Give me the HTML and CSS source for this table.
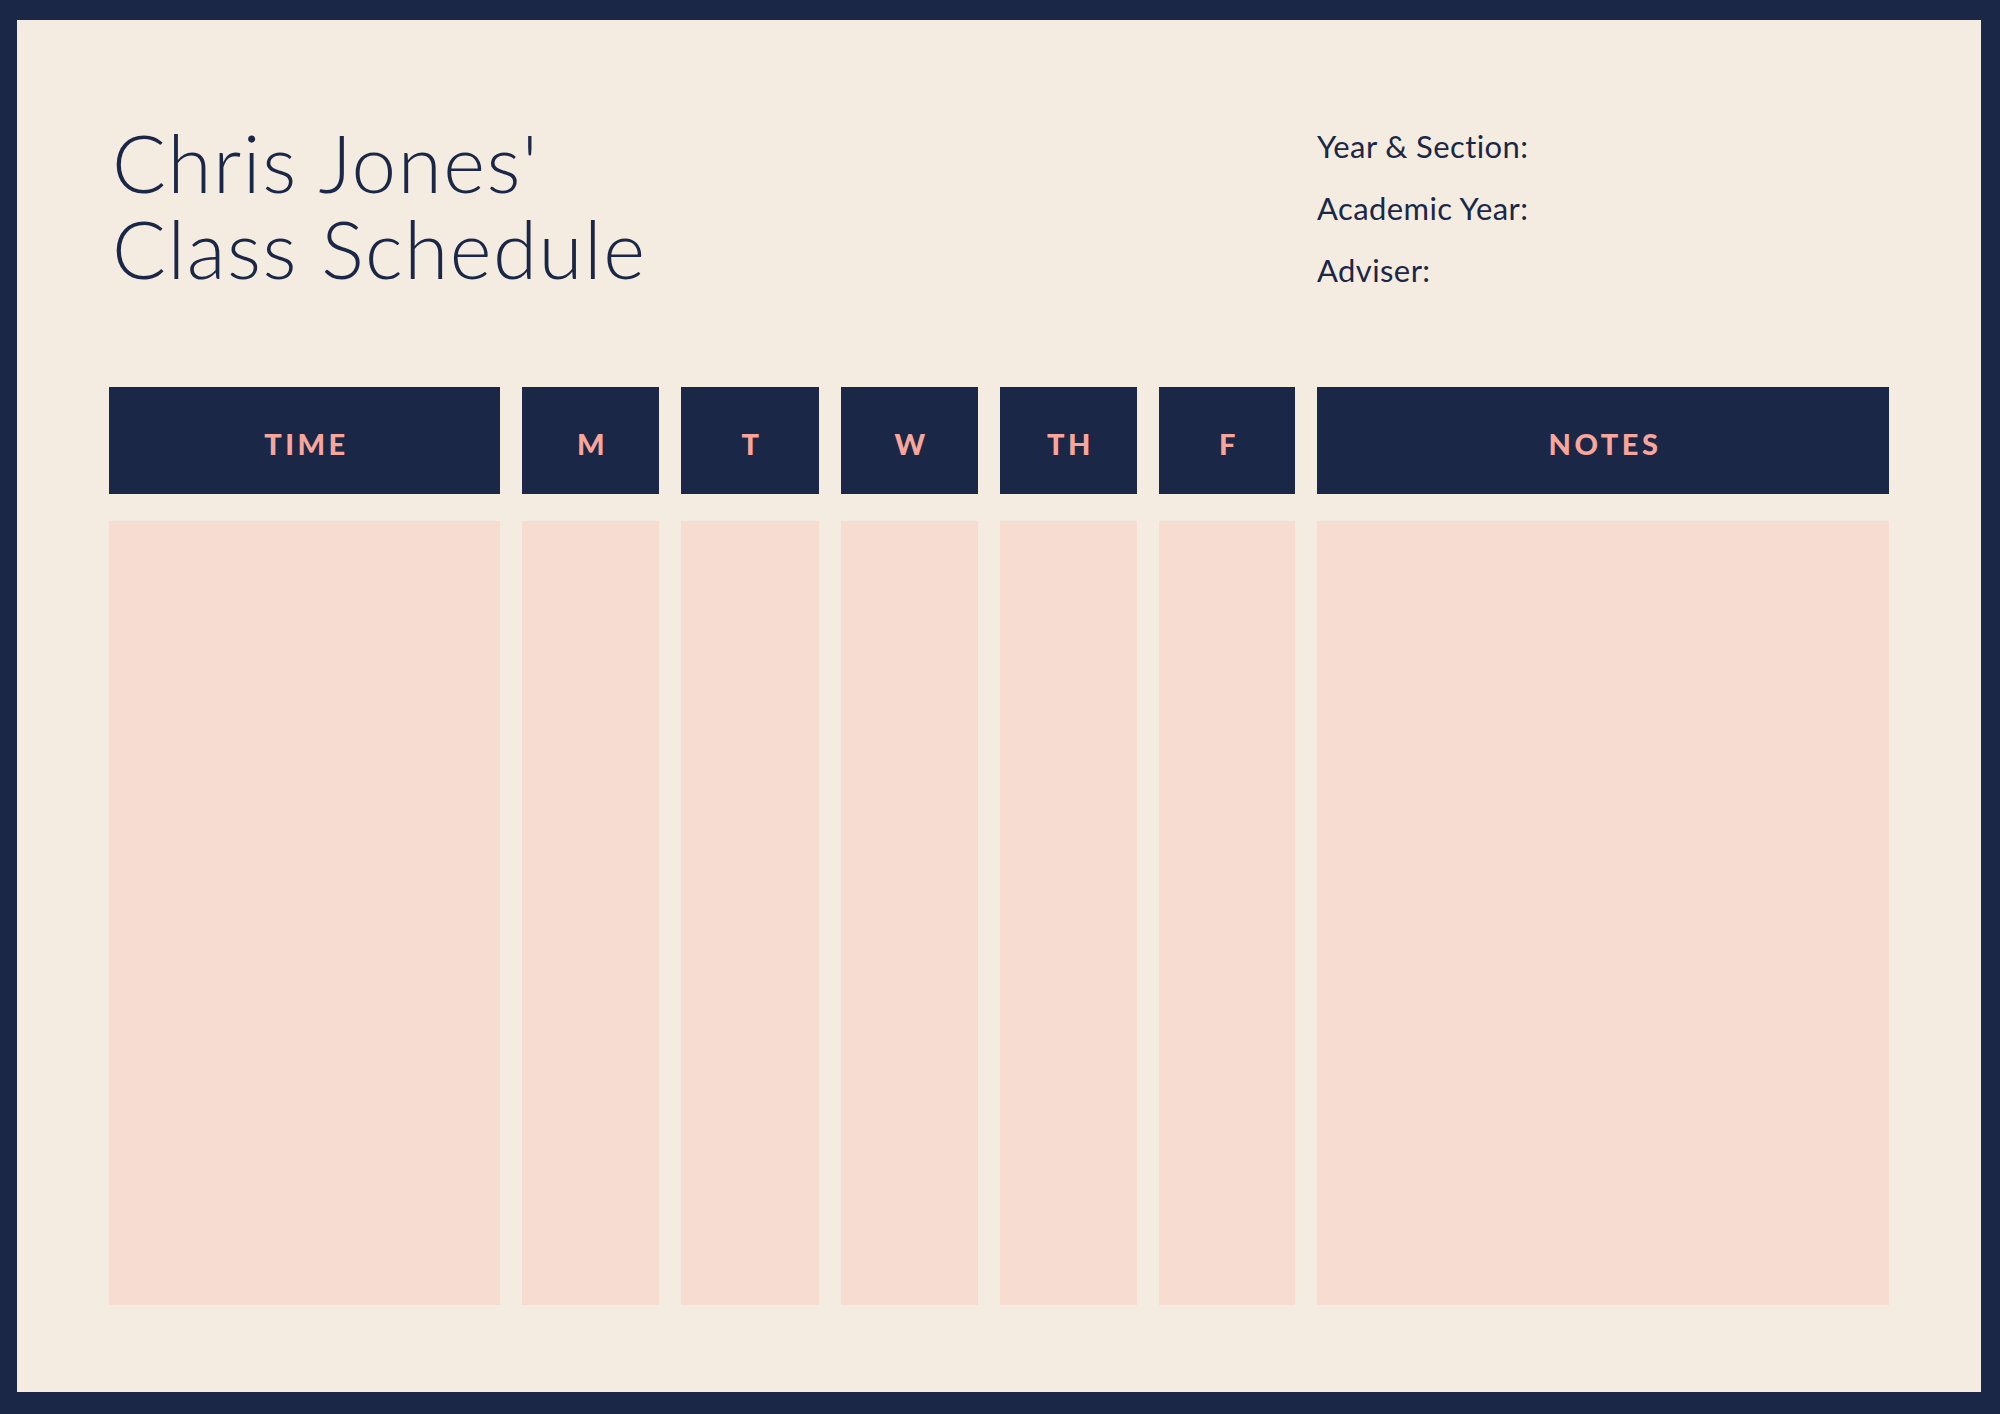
FILE: index.html
```html
<!DOCTYPE html>
<html lang="en">
<head>
<meta charset="utf-8">
<title>Class Schedule</title>
<link rel="stylesheet" href="styles.css">
</head>
<body>
<div class="frame">
  <div class="sheet">
    <section class="top grid">
      <h1 class="title"><span class="line">Chris Jones'</span><span class="line">Class Schedule</span></h1>
      <div class="info">
        <p>Year &amp; Section:</p>
        <p>Academic Year:</p>
        <p>Adviser:</p>
      </div>
    </section>
    <section class="table">
      <div class="grid heads">
        <div class="head">TIME</div>
        <div class="head">M</div>
        <div class="head">T</div>
        <div class="head">W</div>
        <div class="head">TH</div>
        <div class="head">F</div>
        <div class="head">NOTES</div>
      </div>
      <div class="grid bodies">
        <div class="cell"></div>
        <div class="cell"></div>
        <div class="cell"></div>
        <div class="cell"></div>
        <div class="cell"></div>
        <div class="cell"></div>
        <div class="cell"></div>
      </div>
    </section>
  </div>
</div>
</body>
</html>
```
FILE: styles.css
```css
html, body {
  margin: 0;
  padding: 0;
}
body {
  width: 2000px;
  height: 1414px;
  background: #1b2746;
  font-family: "Lato", "Noto Sans", sans-serif;
  color: #1b2746;
}
.frame {
  box-sizing: border-box;
  width: 2000px;
  height: 1414px;
  padding: 20px 19px 22px 17px;
}
.sheet {
  box-sizing: border-box;
  height: 100%;
  background: #f4ece0;
  padding: 93px 0 0 92px;
}
.grid {
  display: grid;
  grid-template-columns: 391px 137px 138px 137px 137px 136px 572px;
  column-gap: 22px;
}
.top {
  height: 186px;
}
.title {
  grid-column: 1 / 7;
  margin: 6px 0 0 3px;
  font-weight: 300;
  font-size: 80px;
  line-height: 86px;
  letter-spacing: 1.5px;
}
.line {
  display: block;
  height: 86px;
}
.info {
  grid-column: 7;
  font-size: 31px;
  line-height: 62px;
  letter-spacing: 0.4px;
  padding-top: 2px;
}
.info p {
  margin: 0;
}
.table {
  margin-top: 88px;
}
.heads {
  height: 107px;
}
.head {
  background: #1b2746;
  color: #f8a59c;
  font-weight: 900;
  font-size: 29px;
  letter-spacing: 3.5px;
  display: flex;
  align-items: center;
  justify-content: center;
  padding-left: 4px;
  padding-top: 5px;
  box-sizing: border-box;
}
.bodies {
  margin-top: 27px;
  height: 784px;
}
.cell {
  background: #f6dcd1;
}
```
